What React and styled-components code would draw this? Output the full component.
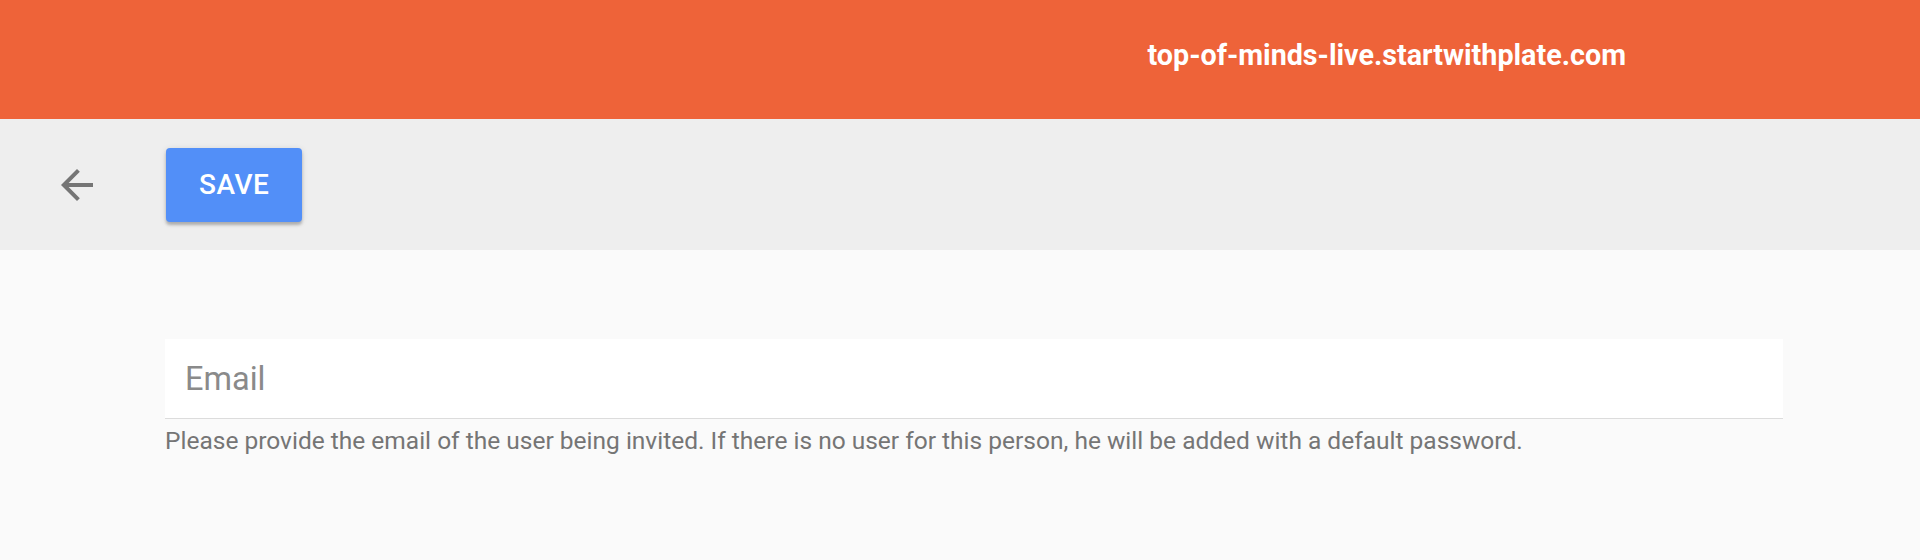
import React from "react";
import styled, { createGlobalStyle } from "styled-components";

const GlobalStyle = createGlobalStyle`
    html, body {
        margin: 0;
        padding: 0;
        background: #fafafa;
        font-family: Roboto, "Liberation Sans", sans-serif;
    }
`;

export default function App() {
    return (
        <Page>
            <GlobalStyle />
            <Header>
                <Domain>top-of-minds-live.startwithplate.com</Domain>
            </Header>
            <Toolbar>
                <BackButton aria-label="back">
                    <svg width="48" height="48" viewBox="0 0 24 24">
                        <path
                            fill="currentColor"
                            d="M20 11H7.83l5.59-5.59L12 4l-8 8 8 8 1.41-1.41L7.83 13H20v-2z"
                        />
                    </svg>
                </BackButton>
                <SaveButton>Save</SaveButton>
            </Toolbar>
            <Content>
                <Field>
                    <Input type="email" placeholder="Email" />
                    <Helper>
                        Please provide the email of the user being invited. If
                        there is no user for this person, he will be added with
                        a default password.
                    </Helper>
                </Field>
            </Content>
        </Page>
    );
}

const Page = styled.div`
    display: flex;
    flex-direction: column;
    min-height: 560px;
    background: #fafafa;
`;

const Header = styled.header`
    height: 119px;
    background: #ee6339;
    display: flex;
    align-items: center;
    justify-content: flex-end;
    padding-right: 294px;
    box-sizing: border-box;
`;

const Domain = styled.div`
    color: #fff;
    font-size: 28.7px;
    font-weight: 700;
    margin-top: -10px;
`;

const Toolbar = styled.div`
    height: 131px;
    background: #eeeeee;
    display: flex;
    align-items: center;
    padding-left: 53px;
    gap: 65px;
`;

const BackButton = styled.button`
    width: 48px;
    height: 48px;
    padding: 0;
    border: none;
    background: transparent;
    color: #757575;
    display: flex;
    align-items: center;
    justify-content: center;
    cursor: pointer;
`;

const SaveButton = styled.button`
    height: 74px;
    padding: 0 33px;
    border: none;
    border-radius: 4px;
    background: #528ff8;
    color: #fff;
    font-family: Roboto, "Liberation Sans", sans-serif;
    font-size: 28px;
    font-weight: 500;
    text-transform: uppercase;
    letter-spacing: 0.5px;
    box-shadow: 0 3px 3px rgba(0, 0, 0, 0.22), 0 1px 6px rgba(0, 0, 0, 0.12);
    cursor: pointer;
`;

const Content = styled.main`
    flex: 1;
    padding: 89px 0 0 165px;
`;

const Field = styled.div`
    width: 1618px;
    display: flex;
    flex-direction: column;
`;

const Input = styled.input`
    height: 80px;
    box-sizing: border-box;
    border: none;
    border-bottom: 1px solid #dcdcdc;
    background: #fff;
    padding: 0 20px;
    font-family: Roboto, "Liberation Sans", sans-serif;
    font-size: 32.5px;
    color: #333;
    outline: none;

    &::placeholder {
        color: #8a8a8a;
    }
`;

const Helper = styled.div`
    margin-top: 6px;
    font-size: 24.5px;
    line-height: 32px;
    color: #757575;
`;
